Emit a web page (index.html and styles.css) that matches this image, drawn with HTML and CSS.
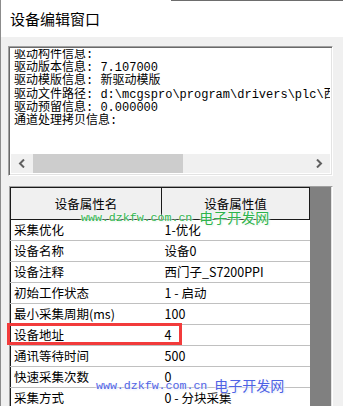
FILE: index.html
```html
<!DOCTYPE html>
<html lang="zh-CN">
  <head>
    <meta charset="UTF-8" />
    <meta name="viewport" content="width=device-width, initial-scale=1.0" />
    <title>设备编辑窗口</title>
    <link rel="stylesheet" href="styles.css">
  </head>
  <body>
    <div class="window">
      <!-- タイトル -->
      <div class="titlebar">设备编辑窗口</div>

      <div class="client">
        <!-- 驱动信息 -->
        <div class="infobox">
          <div class="info-text">
            <div>驱动构件信息:</div>
            <div>驱动版本信息: 7.107000</div>
            <div>驱动模版信息: 新驱动模版</div>
            <div>驱动文件路径: d:\mcgspro\program\drivers\plc\西门子\s7200ppi.dll</div>
            <div>驱动预留信息: 0.000000</div>
            <div>通道处理拷贝信息:</div>
          </div>
          <div class="hscroll">
            <div class="sbtn">
              <svg width="8" height="9" viewBox="0 0 8 9"><path d="M6 0.5 L2 4.5 L6 8.5" fill="none" stroke="#606060" stroke-width="2"/></svg>
            </div>
            <div class="track"><div class="thumb"></div></div>
            <div class="sbtn">
              <svg width="8" height="9" viewBox="0 0 8 9"><path d="M2 0.5 L6 4.5 L2 8.5" fill="none" stroke="#606060" stroke-width="2"/></svg>
            </div>
          </div>
        </div>

        <!-- 设备属性 -->
        <div class="grid-panel">
          <table class="grid">
            <thead>
              <tr><th class="c1">设备属性名</th><th class="c2">设备属性值</th></tr>
            </thead>
            <tbody>
              <tr><td>采集优化</td><td>1-优化</td></tr>
              <tr><td>设备名称</td><td>设备0</td></tr>
              <tr><td>设备注释</td><td>西门子_S7200PPI</td></tr>
              <tr><td>初始工作状态</td><td>1 - 启动</td></tr>
              <tr><td>最小采集周期(ms)</td><td>100</td></tr>
              <tr><td>设备地址</td><td>4</td></tr>
              <tr><td>通讯等待时间</td><td>500</td></tr>
              <tr><td>快速采集次数</td><td>0</td></tr>
              <tr><td>采集方式</td><td>0 - 分块采集</td></tr>
            </tbody>
          </table>
          <div class="grid-rest"></div>
          <div class="highlight"></div>
        </div>
      </div>

      <!-- 水印 -->
      <div class="mark mark-green"><span class="url">www.dzkfw.com.cn</span><span class="name">电子开发网</span></div>
      <div class="mark mark-blue"><span class="url">www.dzkfw.com.cn</span><span class="name">电子开发网</span></div>
    </div>
  </body>
</html>
```

FILE: styles.css
```css
body {
  margin: 0;
  width: 343px;
  height: 406px;
  overflow: hidden;
  font-family: "Noto Sans CJK SC", sans-serif;
  color: #000;
  background-color: #f0f0f0;
}
.window {
  position: relative;
  height: 406px;
  border-left: 1px solid #8c8c8c;
  box-sizing: border-box;
  display: flex;
  flex-direction: column;
}
.titlebar {
  height: 37px;
  flex-shrink: 0;
  box-sizing: border-box;
  padding: 0 0 0 9px;
  font-size: 15px;
  line-height: 38px;
  background: linear-gradient(to right, transparent 170px, #6d6d6d 170px) top / 100% 1px no-repeat, #ffffff;
}
.client {
  flex: 1;
  background-color: #f0f0f0;
  padding: 9px 10px 0 7px;
  display: flex;
  flex-direction: column;
  min-height: 0;
}
.infobox {
  height: 130px;
  flex-shrink: 0;
  box-sizing: border-box;
  background: #fff;
  border: 1px solid;
  border-color: #a0a0a0 #ffffff #ffffff #a0a0a0;
  box-shadow: inset 1px 1px 0 #696969, inset -1px -1px 0 #e3e3e3;
  padding: 2px 2px 2px 2px;
  display: flex;
  flex-direction: column;
}
.info-text {
  flex: 1;
  overflow: hidden;
  padding: 0 0 0 3px;
  font-family: "Liberation Mono", "Noto Sans CJK SC", monospace;
  font-size: 12px;
  line-height: 13.2px;
  white-space: nowrap;
}
.hscroll {
  height: 19px;
  display: flex;
  background: #f0f0f0;
}
.sbtn {
  width: 22px;
  display: flex;
  align-items: center;
  justify-content: center;
}
.track {
  flex: 1;
  display: flex;
}
.thumb {
  width: 150px;
  background: #cdcdcd;
}
.grid-panel {
  position: relative;
  flex: 1;
  margin: 10px 0 0 1px;
  display: flex;
  align-items: flex-start;
  border: 1px solid;
  border-color: #a0a0a0 #ffffff #ffffff #a0a0a0;
  border-bottom: none;
  box-shadow: inset -1px 0 0 #e3e3e3;
  background: #808080;
}
.grid {
  width: 300px;
  border-collapse: collapse;
  background: #fff;
  font-size: 12.5px;
  border-top: 1px solid #1a1a1a;
  border-left: 1px solid #1a1a1a;
}
.grid th {
  height: 31px;
  padding: 0;
  font-weight: normal;
  background: #f0f0f0;
  border-right: 1px solid #1a1a1a;
  border-bottom: 1px solid #1a1a1a;
}
.grid th.c1 {
  width: 150px;
}
.grid td {
  height: 20px;
  padding: 0 0 0 3px;
  border-bottom: 1px solid #c0c0c0;
  white-space: nowrap;
  line-height: 20px;
}
.grid-rest {
  flex: 1;
  align-self: stretch;
  margin-right: 1px;
  background: #808080;
}
.highlight {
  position: absolute;
  left: -3px;
  top: 136px;
  width: 175px;
  height: 22px;
  box-sizing: border-box;
  border: 3px solid #f23b3b;
}
.mark {
  position: absolute;
  display: flex;
  align-items: center;
  gap: 7px;
  white-space: nowrap;
}
.mark .url {
  font-family: "Liberation Mono", monospace;
  font-size: 11.6px;
}
.mark .name {
  font-size: 14px;
}
.mark-green {
  left: 80px;
  top: 207px;
  color: #2fb34c;
  text-shadow: 0 0 2px #fff, 0 0 3px #fff, 1px 1px 2px #d8f0dc;
}
.mark-blue {
  left: 95px;
  top: 375px;
  color: #4e62e4;
  text-shadow: 0 0 2px #fff, 0 0 3px #fff, 1px 1px 2px #dde2fa;
}
```
